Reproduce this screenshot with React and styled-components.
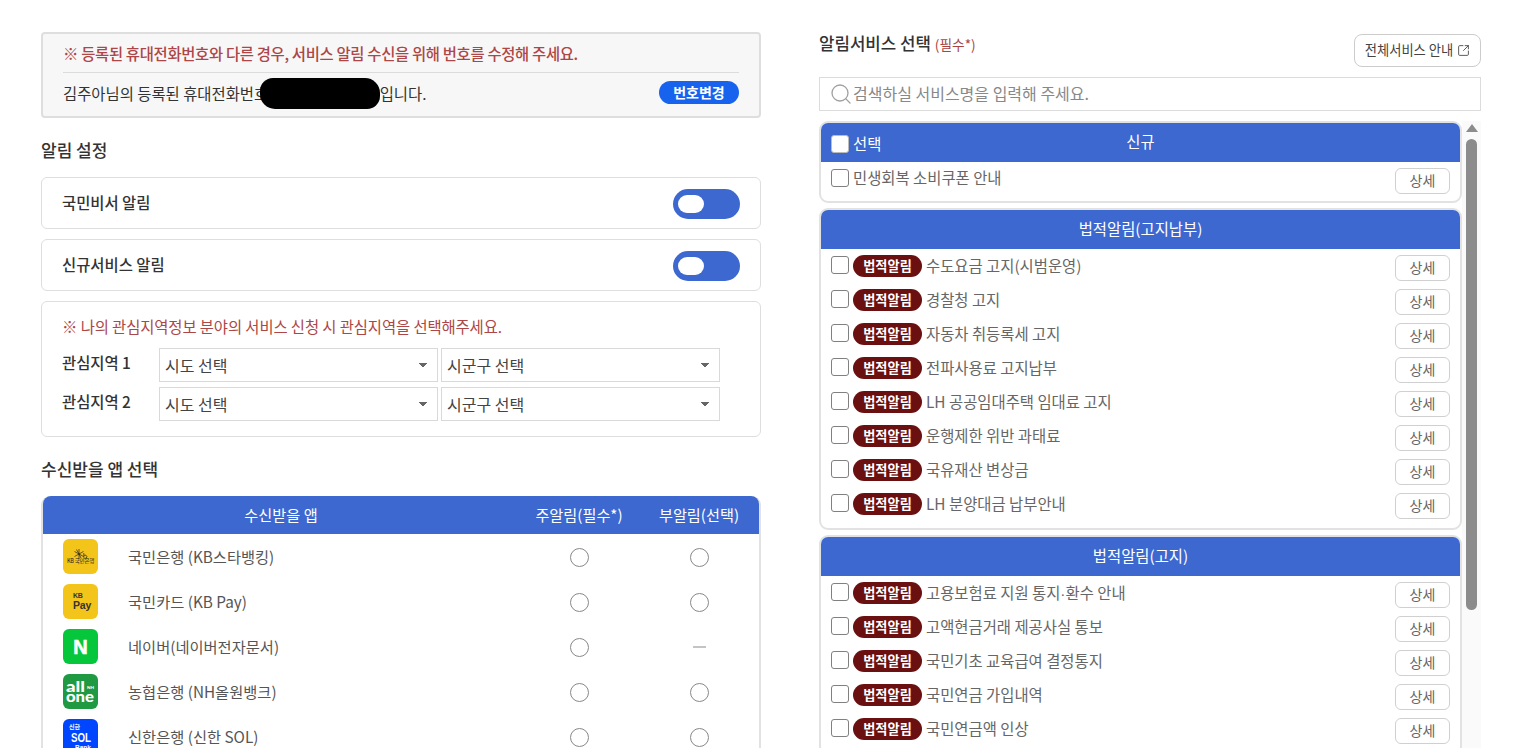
import React from "react";
import styled, { createGlobalStyle } from "styled-components";
import { Search, SquareArrowOutUpRight } from "lucide-react";

const BLUE = "#3d68cf";

const GlobalStyle = createGlobalStyle`
  html, body {
    margin: 0;
    height: 100%;
    overflow: hidden;
    background: #fff;
  }
  body {
    font-family: "Noto Sans CJK KR", "Noto Sans", sans-serif;
    color: #333;
  }
  * {
    box-sizing: border-box;
  }
`;

const Page = styled.div`
  display: flex;
  align-items: flex-start;
  gap: 58px;
  padding: 32px 54px 0 41px;
`;

const LeftColumn = styled.div`
  width: 720px;
  flex: none;
`;

const RightColumn = styled.div`
  width: 662px;
  flex: none;
  margin-top: 2px;
`;

const Notice = styled.div`
  height: 86px;
  padding: 7px 20px 0;
  background: #f7f7f7;
  border: 2px solid #dedede;
  border-radius: 4px;
`;

const RedText = styled.p`
  margin: 0;
  font-size: 15.4px;
  line-height: 24px;
  font-weight: ${(p) => p.$weight || 500};
  letter-spacing: ${(p) => p.$spacing}px;
  color: #ad4646;
`;

const NoticeRow = styled.div`
  position: relative;
  display: flex;
  align-items: center;
  justify-content: space-between;
  height: 40px;
  margin-top: 7px;
  border-top: 1px solid #dcdcdc;
  font-size: 15.4px;
  color: #333;
`;

const Redaction = styled.span`
  position: absolute;
  left: 197px;
  top: 5px;
  width: 120px;
  height: 31px;
  background: #000;
  border-radius: 13px 15px 13px 15px;
`;

const ChangeButton = styled.button`
  width: 80px;
  height: 23px;
  padding: 0 0 2px;
  border: none;
  border-radius: 12px;
  background: #1763ee;
  color: #fff;
  font: 700 14px "Noto Sans CJK KR", sans-serif;
`;

const SectionTitle = styled.h2`
  margin: 20px 0 15px;
  font-size: 17px;
  line-height: 24px;
  font-weight: 500;
  color: #333;
`;

const Card = styled.div`
  border: 1px solid #dedede;
  border-radius: 6px;
  margin-bottom: 10px;
`;

const ToggleCard = styled(Card)`
  display: flex;
  align-items: center;
  justify-content: space-between;
  height: 52px;
  padding: 0 20px 2px;
  font-size: 15.4px;
  font-weight: 500;
  color: #333;
`;

const Toggle = styled.span`
  display: flex;
  align-items: center;
  width: 67px;
  height: 30px;
  margin-top: 4px;
  padding-left: 5px;
  border-radius: 15px;
  background: ${BLUE};
`;

const ToggleKnob = styled.span`
  width: 26px;
  height: 18px;
  border-radius: 9px;
  background: #fff;
`;

const RegionCard = styled(Card)`
  height: 136px;
  padding: 12px 20px 0;
  margin-bottom: 0;
`;

const RegionRow = styled.div`
  display: flex;
  align-items: flex-start;
  gap: 3px;
  margin-top: 5px;
  &:first-of-type {
    margin-top: 10px;
  }
`;

const RegionLabel = styled.label`
  width: 94px;
  flex: none;
  font-size: 15.4px;
  line-height: 28px;
  font-weight: 500;
  color: #333;
`;

const Select = styled.select`
  width: 279px;
  height: 34px;
  padding: 0 0 0 5px;
  appearance: none;
  border: 1px solid #d9d9d9;
  border-radius: 0;
  color: #444;
  font: 400 16px "Noto Sans CJK KR", sans-serif;
  background-color: #fff;
  background-image: linear-gradient(to top right, transparent 50%, #666 50%),
    linear-gradient(to top left, transparent 50%, #666 50%);
  background-repeat: no-repeat;
  background-size: 4px 5px, 4px 5px;
  background-position: right 14px top 14px, right 10px top 14px;
`;

const AppTable = styled.div`
  border: 2px solid #e2e2e2;
  border-top: none;
  border-radius: 9px 9px 0 0;
`;

const appColumns = "1fr 120px 120px";

const AppHead = styled.div`
  display: grid;
  grid-template-columns: ${appColumns};
  height: 38px;
  padding-bottom: 3px;
  align-items: center;
  text-align: center;
  background: ${BLUE};
  border-radius: 8px 8px 0 0;
  color: #fff;
  font-size: 15.2px;
`;

const AppRow = styled.div`
  display: grid;
  grid-template-columns: ${appColumns};
  height: 45px;
  align-items: center;
  justify-items: center;
`;

const AppName = styled.div`
  justify-self: start;
  display: flex;
  align-items: center;
  gap: 30px;
  padding-left: 20px;
  font-size: 15.3px;
  color: #555;
`;

const AppLabel = styled.span`
  margin-top: -2px;
`;

const AppIcon = styled.div`
  display: flex;
  flex-direction: column;
  align-items: center;
  justify-content: center;
  width: 35px;
  height: 35px;
  overflow: hidden;
  border-radius: 6px;
  background: ${(p) => p.$bg};
  color: ${(p) => p.$fg || "#fff"};
  font-family: "Liberation Sans", sans-serif;
  font-weight: 700;
  line-height: 1;
`;

const TinyKo = styled.span`
  font-size: 5.5px;
  font-weight: 400;
  letter-spacing: -0.2px;
  white-space: nowrap;
  font-family: "Noto Sans CJK KR", sans-serif;
`;

const PayLabel = styled.span`
  font-size: ${(p) => p.$size}px;
  line-height: ${(p) => p.$size + 1}px;
  letter-spacing: -0.2px;
  align-self: flex-start;
  margin-left: 10px;
`;

const NaverN = styled.span`
  font-size: 20px;
  -webkit-text-stroke: 0.6px #fff;
`;

const Radio = styled.span`
  width: 19px;
  height: 19px;
  margin-top: 2px;
  border: 1px solid #888;
  border-radius: 50%;
  background: #fff;
`;

const Dash = styled.span`
  width: 13px;
  height: 2px;
  background: #c4c4c4;
`;

const RightHead = styled.div`
  display: flex;
  align-items: flex-start;
  justify-content: space-between;
  height: 33px;
`;

const RightTitle = styled.h2`
  margin: -3px 0 0;
  font-size: 16.8px;
  line-height: 24px;
  font-weight: 500;
  color: #333;
`;

const Required = styled.small`
  margin-left: 4px;
  font-size: 13.7px;
  font-weight: 400;
  color: #a84444;
`;

const GuideButton = styled.button`
  display: flex;
  align-items: center;
  justify-content: center;
  gap: 4px;
  width: 127px;
  height: 33px;
  padding: 0 0 3px;
  background: #fff;
  border: 1px solid #ccc;
  border-radius: 8px;
  color: #444;
  font: 400 13.3px "Noto Sans CJK KR", sans-serif;
  svg {
    margin-top: 2px;
  }
`;

const SearchBox = styled.div`
  display: flex;
  align-items: center;
  height: 34px;
  margin-top: 10px;
  padding-left: 9px;
  border: 1px solid #dcdcdc;
  color: #a0a0a0;
`;

const SearchInput = styled.input`
  flex: 1;
  margin-top: -3px;
  border: none;
  outline: none;
  padding: 0;
  font: 400 16px "Noto Sans CJK KR", sans-serif;
  &::placeholder {
    color: #888;
    opacity: 1;
  }
`;

const ServiceArea = styled.div`
  display: flex;
  height: 640px;
  margin-top: 10px;
`;

const ServiceList = styled.div`
  flex: 1;
  min-width: 0;
`;

const ScrollTrack = styled.div`
  display: flex;
  flex: none;
  flex-direction: column;
  align-items: center;
  width: 19px;
  padding-top: 3px;
  background: #fafafa;
`;

const ScrollArrow = styled.span`
  width: 0;
  height: 0;
  border-left: 6.5px solid transparent;
  border-right: 6.5px solid transparent;
  border-bottom: 8px solid #8c8c8c;
`;

const ScrollThumb = styled.span`
  width: 11px;
  height: 471px;
  margin-top: 7px;
  border-radius: 6px;
  background: #8c8c8c;
`;

const ServiceGroup = styled.section`
  margin-bottom: 5px;
  padding-bottom: ${(p) => p.$bottom}px;
  border: 2px solid #e2e2e2;
  border-radius: 9px;
`;

const GroupHead = styled.div`
  position: relative;
  display: flex;
  align-items: center;
  justify-content: center;
  height: 39px;
  padding-bottom: 3px;
  background: ${BLUE};
  border-radius: 7px 7px 0 0;
  color: #fff;
  font-size: 15.4px;
`;

const HeadSelect = styled.label`
  position: absolute;
  left: 10px;
  top: 11px;
  display: flex;
  align-items: center;
  gap: 4px;
`;

const HeadLabel = styled.span`
  margin-top: -2px;
`;

const Check = styled.span`
  flex: none;
  width: 18px;
  height: 18px;
  margin-top: ${(p) => (p.$head ? 0 : 1)}px;
  background: #fff;
  border: 1px solid ${(p) => (p.$head ? "#bbb" : "#808080")};
  border-radius: 3px;
`;

const ServiceRow = styled.div`
  display: flex;
  align-items: flex-start;
  height: 34px;
  padding: 6px 10px 0;
`;

const ServiceName = styled.span`
  margin-left: 4px;
  font-size: 15.4px;
  line-height: 21px;
  color: #666;
`;

const NewServiceName = styled(ServiceName)`
  margin-top: -1px;
`;

const MiddleDot = styled.span`
  font-family: "Liberation Sans", sans-serif;
`;

const Badge = styled.span`
  flex: none;
  width: 69px;
  height: 22px;
  margin-left: 4px;
  border-radius: 11px;
  background: #6b1010;
  color: #fff;
  font-size: 13.2px;
  font-weight: 700;
  line-height: 21px;
  text-align: center;
`;

const DetailButton = styled.button`
  flex: none;
  width: 55px;
  height: 26px;
  margin-left: auto;
  padding: 0 0 3px;
  background: #fff;
  border: 1px solid #d0d0d0;
  border-radius: 6px;
  color: #666;
  font: 400 14px "Noto Sans CJK KR", sans-serif;
`;

const KbStar = () => (
  <svg width="16" height="10" viewBox="0 0 16 10" fill="none" stroke="#222" strokeWidth="0.7">
    <path d="M6 0V10M1.5 2.5l9 5M1.5 7.5l4.5-2.5 4.5-2.5M3.5 .5L6 5l2 4" />
    <path d="M10.8 4v4.5M10.8 7a1.6 1.6 0 1 1 0 1.5" />
  </svg>
);

const AllOneLogo = () => (
  <svg width="35" height="35" viewBox="0 0 35 35" fill="#fff" fontFamily="Lato, sans-serif" fontWeight="900">
    <text x="3" y="18" fontSize="15" textLength="19" lengthAdjust="spacingAndGlyphs">all</text>
    <text x="3" y="28" fontSize="15" textLength="28" lengthAdjust="spacingAndGlyphs">one</text>
    <text x="24" y="15" fontSize="4.5">NH</text>
  </svg>
);

const SolLogo = () => (
  <svg width="35" height="35" viewBox="0 0 35 35" fill="#fff" fontFamily="Liberation Sans, sans-serif">
    <text x="6" y="9.5" fontSize="6" fontFamily="Noto Sans CJK KR, sans-serif">신한</text>
    <text x="8" y="22.5" fontSize="13" textLength="20" lengthAdjust="spacingAndGlyphs" fontWeight="700">SOL</text>
    <text x="12" y="31" fontSize="7.5" textLength="16" lengthAdjust="spacingAndGlyphs" fontWeight="700">Bank</text>
  </svg>
);

const apps = [
  {
    name: "국민은행 (KB스타뱅킹)",
    bg: "#f3c419",
    fg: "#222",
    logo: (
      <>
        <KbStar />
        <TinyKo>KB 국민은행</TinyKo>
      </>
    ),
  },
  {
    name: "국민카드 (KB Pay)",
    bg: "#f3c419",
    fg: "#333",
    logo: (
      <>
        <PayLabel $size={7}>KB</PayLabel>
        <PayLabel $size={10.5}>Pay</PayLabel>
      </>
    ),
  },
  { name: "네이버(네이버전자문서)", bg: "#06c73c", logo: <NaverN>N</NaverN>, noSub: true },
  { name: "농협은행 (NH올원뱅크)", bg: "#1f9a43", logo: <AllOneLogo /> },
  { name: "신한은행 (신한 SOL)", bg: "#0046ff", logo: <SolLogo /> },
];

const legalPayment = [
  "수도요금 고지(시범운영)",
  "경찰청 고지",
  "자동차 취등록세 고지",
  "전파사용료 고지납부",
  "LH 공공임대주택 임대료 고지",
  "운행제한 위반 과태료",
  "국유재산 변상금",
  "LH 분양대금 납부안내",
];

const legalNotice = [
  <>고용보험료 지원 통지<MiddleDot>·</MiddleDot>환수 안내</>,
  "고액현금거래 제공사실 통보",
  "국민기초 교육급여 결정통지",
  "국민연금 가입내역",
  "국민연금액 인상",
];

const LegalRow = ({ name }) => (
  <ServiceRow>
    <Check />
    <Badge>법적알림</Badge>
    <ServiceName>{name}</ServiceName>
    <DetailButton>상세</DetailButton>
  </ServiceRow>
);

const App = () => {
  return (
    <Page>
      <GlobalStyle />
      <LeftColumn>
        <Notice>
          <RedText $spacing={-0.32}>※ 등록된 휴대전화번호와 다른 경우, 서비스 알림 수신을 위해 번호를 수정해 주세요.</RedText>
          <NoticeRow>
            <span>김주아님의 등록된 휴대전화번호 010-0000-0000 입니다.</span>
            <Redaction />
            <ChangeButton>번호변경</ChangeButton>
          </NoticeRow>
        </Notice>

        <SectionTitle>알림 설정</SectionTitle>
        <ToggleCard>
          국민비서 알림
          <Toggle><ToggleKnob /></Toggle>
        </ToggleCard>
        <ToggleCard>
          신규서비스 알림
          <Toggle><ToggleKnob /></Toggle>
        </ToggleCard>
        <RegionCard>
          <RedText $spacing={-0.1} $weight={400}>※ 나의 관심지역정보 분야의 서비스 신청 시 관심지역을 선택해주세요.</RedText>
          {[1, 2].map((n) => (
            <RegionRow key={n}>
              <RegionLabel>관심지역 {n}</RegionLabel>
              <Select><option>시도 선택</option></Select>
              <Select><option>시군구 선택</option></Select>
            </RegionRow>
          ))}
        </RegionCard>

        <SectionTitle>수신받을 앱 선택</SectionTitle>
        <AppTable>
          <AppHead>
            <span>수신받을 앱</span>
            <span>주알림(필수*)</span>
            <span>부알림(선택)</span>
          </AppHead>
          {apps.map((app) => (
            <AppRow key={app.name}>
              <AppName>
                <AppIcon $bg={app.bg} $fg={app.fg}>{app.logo}</AppIcon>
                <AppLabel>{app.name}</AppLabel>
              </AppName>
              <Radio />
              {app.noSub ? <Dash /> : <Radio />}
            </AppRow>
          ))}
        </AppTable>
      </LeftColumn>

      <RightColumn>
        <RightHead>
          <RightTitle>알림서비스 선택<Required>(필수*)</Required></RightTitle>
          <GuideButton>
            전체서비스 안내
            <SquareArrowOutUpRight size={13} strokeWidth={1.6} />
          </GuideButton>
        </RightHead>
        <SearchBox>
          <Search size={24} strokeWidth={1.3} />
          <SearchInput placeholder="검색하실 서비스명을 입력해 주세요." />
        </SearchBox>
        <ServiceArea>
          <ServiceList>
            <ServiceGroup $bottom={5}>
              <GroupHead>
                <HeadSelect><Check $head /><HeadLabel>선택</HeadLabel></HeadSelect>
                신규
              </GroupHead>
              <ServiceRow>
                <Check />
                <NewServiceName>민생회복 소비쿠폰 안내</NewServiceName>
                <DetailButton>상세</DetailButton>
              </ServiceRow>
            </ServiceGroup>
            <ServiceGroup $bottom={7}>
              <GroupHead>법적알림(고지납부)</GroupHead>
              {legalPayment.map((name) => <LegalRow key={name} name={name} />)}
            </ServiceGroup>
            <ServiceGroup $bottom={7}>
              <GroupHead>법적알림(고지)</GroupHead>
              {legalNotice.map((name, i) => <LegalRow key={i} name={name} />)}
            </ServiceGroup>
          </ServiceList>
          <ScrollTrack>
            <ScrollArrow />
            <ScrollThumb />
          </ScrollTrack>
        </ServiceArea>
      </RightColumn>
    </Page>
  );
};

export default App;
